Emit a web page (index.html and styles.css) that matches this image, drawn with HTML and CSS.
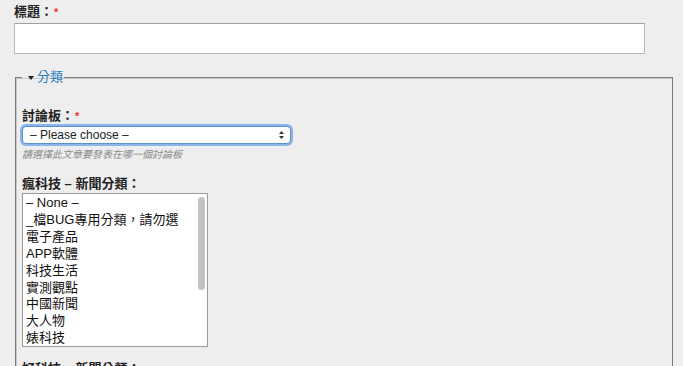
FILE: index.html
```html
<!DOCTYPE html>
<html lang="zh-Hant">
<head>
<meta charset="utf-8">
<title>發表文章</title>
<link rel="stylesheet" href="styles.css">
</head>
<body>
<form class="page">
  <div class="form-item">
    <label class="label" for="title">標題：<span class="req">*</span></label>
    <input class="text-input" id="title" type="text">
  </div>

  <fieldset class="group">
    <legend class="legend"><svg class="caret" width="6" height="4" viewBox="0 0 6 4"><path d="M0 0H6L3 4Z" fill="#222"/></svg><span class="legend-text">分類</span></legend>

    <div class="form-item board">
      <label class="label" for="board">討論板：<span class="req">*</span></label>
      <div class="select-wrap">
        <select class="select" id="board">
          <option>– Please choose –</option>
        </select>
        <svg class="updown" width="5" height="8" viewBox="0 0 5 8"><path d="M2.5 0L5 3H0Z M2.5 8L5 5H0Z" fill="#333"/></svg>
      </div>
      <div class="help">請選擇此文章要發表在哪一個討論板</div>
    </div>

    <div class="form-item cat">
      <div class="label">瘋科技 – 新聞分類：</div>
      <div class="listbox" role="listbox">
        <div class="options">
          <div class="opt">– None –</div>
          <div class="opt">_檔BUG專用分類，請勿選</div>
          <div class="opt">電子產品</div>
          <div class="opt">APP軟體</div>
          <div class="opt">科技生活</div>
          <div class="opt">實測觀點</div>
          <div class="opt">中國新聞</div>
          <div class="opt">大人物</div>
          <div class="opt">婊科技</div>
        </div>
        <div class="track"><div class="thumb"></div></div>
      </div>
    </div>

    <div class="form-item cat2">
      <div class="label">好科技 – 新聞分類：</div>
    </div>
  </fieldset>
</form>
</body>
</html>
```
FILE: styles.css
```css
html, body {
  margin: 0;
  background: #eeeeee;
}
body {
  font-family: "Liberation Sans", "Noto Sans CJK TC", sans-serif;
  font-size: 13px;
  color: #222;
  overflow: hidden;
  height: 366px;
}
.page {
  padding: 4px 0 0 14px;
}
.label {
  display: block;
  font-weight: bold;
  font-size: 13px;
  line-height: 16px;
  color: #222;
}
.req {
  color: #e32;
  font-size: 11px;
  vertical-align: top;
  margin-left: 1px;
}
.text-input {
  display: block;
  box-sizing: border-box;
  margin: 3px 0 0 0;
  width: 631px;
  height: 31px;
  border: 1px solid #b8b8b8;
  border-top-color: #a0a0a0;
  background: #fff;
  padding: 0 4px;
}
.group {
  box-sizing: border-box;
  margin: 15px 0 0 1px;
  width: 658px;
  padding: 0 6px 40px 6px;
  border: 1px solid #7a7a7a;
  box-shadow: inset 1px 1px 0 #c8c8c8;
}
.legend {
  padding: 0 1px 0 6px;
  line-height: 16px;
  height: 16px;
  display: flex;
  align-items: center;
  gap: 3px;
}
.caret {
  display: block;
  margin-top: 1px;
}
.legend-text {
  color: #2a7dc4;
  font-size: 13px;
}
.board {
  margin-top: 23px;
}
.select-wrap {
  position: relative;
  margin-top: 2px;
  width: 269px;
  height: 18px;
}
.select {
  appearance: none;
  -webkit-appearance: none;
  display: block;
  box-sizing: border-box;
  width: 269px;
  height: 18px;
  margin: 0;
  padding: 0 0 0 7px;
  border: 1px solid #5a8fd0;
  border-radius: 4px;
  background: #fff;
  box-shadow: 0 0 0 2px #8ab6ea;
  font-family: "Liberation Sans", "Noto Sans CJK TC", sans-serif;
  font-size: 12px;
  line-height: 16px;
  color: #222;
}
.updown {
  position: absolute;
  right: 7px;
  top: 5px;
}
.help {
  margin-top: 4px;
  font-size: 10px;
  line-height: 14px;
  font-style: italic;
  color: #8a8a8a;
}
.cat {
  margin-top: 14px;
}
.listbox {
  margin-top: 1px;
  box-sizing: border-box;
  width: 186px;
  height: 154px;
  border: 1px solid #9a9a9a;
  background: #fff;
  display: flex;
  overflow: hidden;
}
.options {
  flex: 1;
  padding: 1px 0 0 3px;
}
.opt {
  font-size: 13px;
  line-height: 16.9px;
  color: #111;
  white-space: nowrap;
}
.track {
  width: 10px;
  padding: 3px 2px 0 1px;
  box-sizing: border-box;
}
.thumb {
  width: 7px;
  height: 93px;
  border-radius: 4px;
  background: #c2c2c2;
}
.cat2 {
  margin-top: 14px;
}
```
